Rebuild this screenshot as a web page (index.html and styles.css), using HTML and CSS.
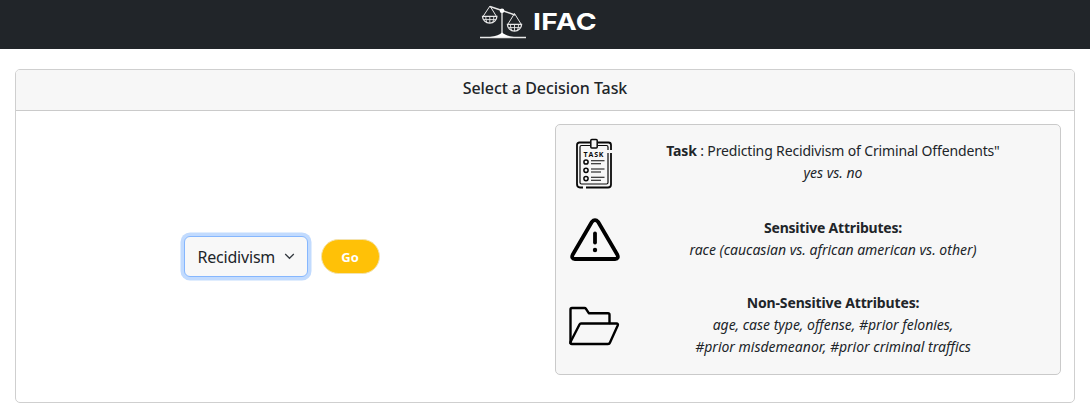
FILE: index.html
```html
<!DOCTYPE html>
<html lang="en">
<head>
<meta charset="utf-8">
<title>IFAC</title>
<link rel="stylesheet" href="styles.css">
</head>
<body>
<header class="navbar">
  <svg class="logo" width="46" height="36" viewBox="0 0 46 36" fill="none" stroke="#e9e9e9">
    <path d="M10 1.500 22 5.500 35 10" stroke-width="1.400"/>
    <path d="M22 6V30" stroke-width="1.300"/>
    <circle cx="22" cy="5.700" r="2.300" fill="#fff" stroke="none"/>
    <path d="M10 1 3 11.500M10 1 16.500 11.500M34.500 8.500 28 19M34.500 8.500 41 19" stroke-width="1"/>
    <path d="M2.500 11.300a7.200 6.800 0 0 0 14.400 0zM27.400 19.300a7.100 6.800 0 0 0 14.200 0z" stroke-width="1.300"/>
    <path d="M9.800 11V18M6.800 17.300Q5.600 14.500 5.800 11.300M12.800 17.300Q14 14.500 13.800 11.300M4 14.600H16M34.500 19V26M31.500 25.300Q30.300 22.500 30.500 19.300M37.500 25.300Q38.700 22.500 38.500 19.300M28.800 22.600H40.200" stroke-width=".9"/>
    <path d="M10 32Q19 30.500 22 27.500 25 30.500 34 32z" fill="#fff" stroke="none"/>
    <path d="M0 32.500H46" stroke-width="1.300"/>
  </svg>
  <span class="brand">IFAC</span>
</header>
<main class="card">
  <h1 class="card-header"><span>Select a Decision Task</span></h1>
  <div class="card-body">
    <form class="chooser">
      <button class="select" type="button"><span class="select-text">Recidivism</span>
        <svg width="11" height="8" viewBox="0 0 11 8" fill="none" stroke="#343a40" stroke-width="1.300"><path d="m1.200 1 4.300 4.300 4.300-4.300"/></svg>
      </button>
      <button class="go" type="button">Go</button>
    </form>
    <section class="details">
      <div class="detail task">
        <svg class="icon" width="38" height="52" viewBox="0 0 38 52" fill="none" stroke="#080808">
          <path d="M15 4.500H4.500Q2 4.500 2 7V46Q2 49.500 5 49.500H8M11 49.500H33Q36 49.500 36 46.500V15M36 12V7Q36 4.500 33.500 4.500H23" stroke-width="1.800"/>
          <path d="M15 7.500H6.500Q5 7.500 5 9V44.500Q5 46 6.500 46H31.500Q33 46 33 44.500V15M33 12V9Q33 7.500 31.500 7.500H23" stroke-width="1.200"/>
          <rect x="15.800" y="1.500" width="6.400" height="8.600" rx="1" stroke-width="1.500"/>
          <g stroke-width="1.500"><circle cx="11" cy="24" r="2.100"/><circle cx="11" cy="32.300" r="2.100"/><circle cx="11" cy="40.600" r="2.100"/></g>
          <path d="M16 22.800H29.500M16 25.800H26M16 31H29.500M16 34H26M16 39.300H29.500M16 42.300H26" stroke-width="1.100"/>
          <text class="clip-text" x="8.500" y="19.300" textLength="20" fill="#080808" stroke="none">TASK</text>
        </svg>
        <p class="text"><span class="line first"><b>Task</b> : Predicting Recidivism of Criminal Offendents"</span><i class="line">yes vs. no</i></p>
      </div>
      <div class="detail sensitive">
        <svg class="icon" width="50" height="44" viewBox="0 0 50 44" fill="none" stroke="#000" stroke-linecap="round" stroke-linejoin="round">
          <path d="M21.800 4 2.800 36.500Q.8 40.700 5 41H45Q49.200 40.700 47.200 36.500L28.200 4Q25 .4 21.800 4Z" stroke-width="3.800"/>
          <path d="M25 15.500V24.500" stroke-width="3.800"/><circle cx="25" cy="32" r="2.200" fill="#000" stroke="none"/>
        </svg>
        <p class="text"><b class="line b2">Sensitive Attributes:</b><i class="line">race (caucasian vs. african american vs. other)</i></p>
      </div>
      <div class="detail other">
        <svg class="icon" width="52" height="40" viewBox="0 0 52 40" fill="none" stroke="#000" stroke-width="2.400" stroke-linecap="round" stroke-linejoin="round">
          <path d="M2.500 37V3.500Q2.500 2 4 2H16.500Q17.500 2 18 2.800L20.800 7.200H40Q41.500 7.200 41.500 8.700V17"/>
          <path d="M2.500 36 11.500 18.500Q12 17.500 13 17.500H48.500Q50.500 17.500 49.700 19.500L42 36.500Q41.500 38 40 38H4Q2 38 2.500 36Z"/>
        </svg>
        <p class="text"><b class="line b3">Non-Sensitive Attributes:</b><i class="line i3">age, case type, offense, #prior felonies,</i><i class="line">#prior misdemeanor, #prior criminal traffics</i></p>
      </div>
    </section>
  </div>
</main>
</body>
</html>
```
FILE: styles.css
```css
* { box-sizing: border-box; }
body { margin: 0; background: #fff; color: #212529; font-family: "Noto Sans", "Open Sans", sans-serif; }
.navbar { height: 49px; background: #212529; display: flex; padding: 5px 0 0 480px; gap: 7px; }
.logo { display: block; flex: none; }
.brand { color: #fff; font: 700 23.5px/34px Inter, sans-serif; letter-spacing: .3px; transform: scaleX(1.2); transform-origin: left; }
.card { height: 334px; margin: 20px 15px 0; border: 1px solid #cfcfcf; border-radius: 5px; overflow: hidden; }
.card-header { height: 41px; margin: 0; border-bottom: 1px solid #cacaca; background: #f7f7f7; text-align: center; font: 500 16px/37px "Noto Sans", sans-serif; letter-spacing: -.05px; }
.card-body { display: flex; justify-content: space-between; padding: 13px; }
.chooser { flex: none; width: 505px; height: 251px; display: flex; align-items: center; justify-content: center; gap: 13px; padding-top: 14px; }
.select { width: 124px; height: 41px; padding: 0 12px 0 13px; display: flex; align-items: center; justify-content: space-between; border: 1px solid #86b7fe; border-radius: 6px; background: #f8f8f8; box-shadow: 0 0 0 3.5px #c2dbfe; color: #212529; font: 16px "Noto Sans", sans-serif; }
.select-text { letter-spacing: -.2px; white-space: nowrap; }
.go { width: 59px; height: 35px; padding: 0; border: 1px solid #f3e3b0; border-radius: 18px; background: #ffc107; color: #fff; font: 700 13px "Open Sans", sans-serif; }
.details { flex: none; width: 506px; height: 251px; border: 1px solid #cacaca; border-radius: 5px; background: #f7f7f7; }
.detail { display: flex; align-items: center; }
.task { height: 80px; }
.sensitive { height: 72px; }
.other { height: 96px; }
.icon { flex: none; }
.task .icon { margin: -2px 19px 0 19px; }
.sensitive .icon { margin: -2px 12px 0 14px; }
.other .icon { margin: 1px 12px 0 12px; }
.text { width: 402px; margin: 0; text-align: center; font-size: 14px; line-height: 22px; }
.task .text { margin-top: -6px; }
.sensitive .text { margin-top: -4px; }
.line { display: block; white-space: nowrap; }
.clip-text { font: 700 7px "Open Sans", sans-serif; }
.first { letter-spacing: -.15px; }
.b2 { letter-spacing: -.2px; }
.b3 { letter-spacing: -.13px; }
.i3 { letter-spacing: -.02px; }
```
